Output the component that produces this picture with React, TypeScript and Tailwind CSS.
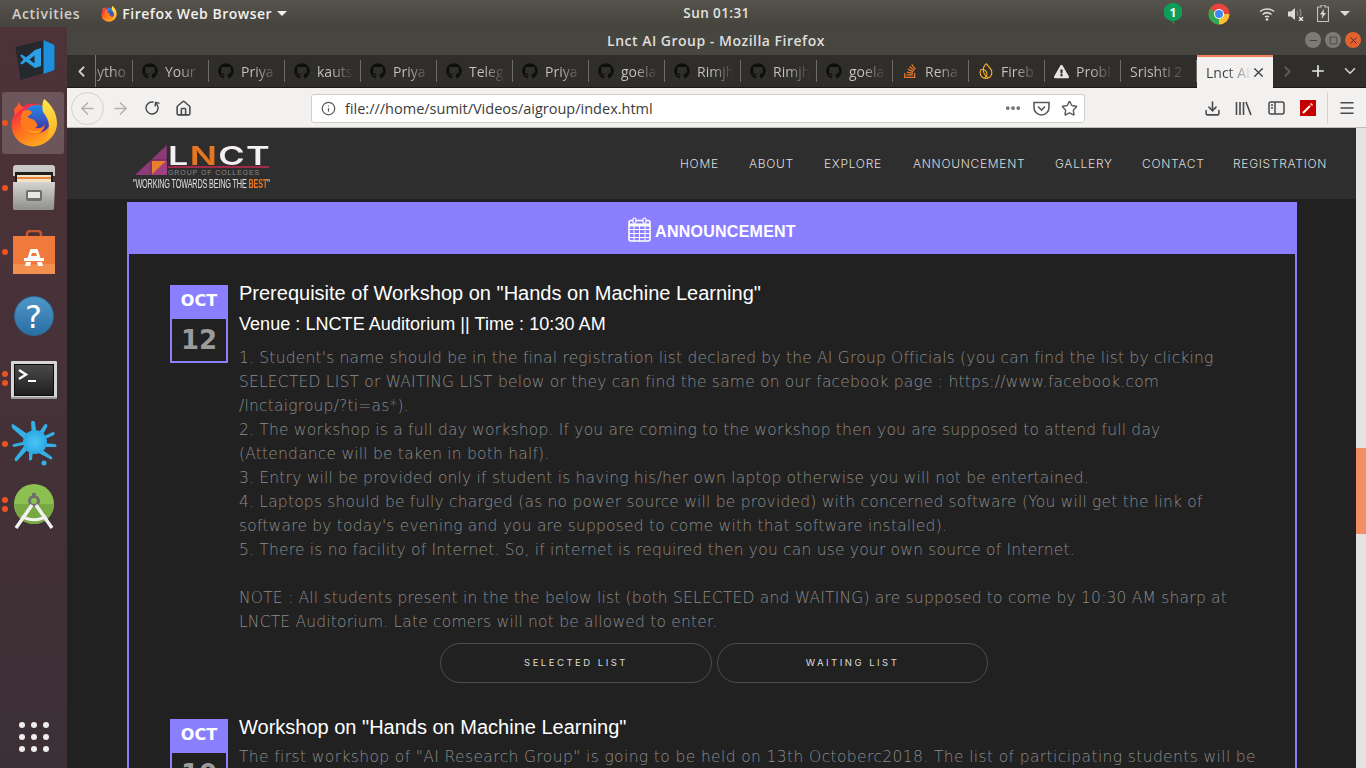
import { ChevronDown, ChevronLeft, ChevronRight, Download, Ellipsis, Info, Menu, Plus, RotateCw, ArrowLeft, ArrowRight, Star, Minus, X, Square, House } from "lucide-react";
import { FaGithub, FaStackOverflow, FaExclamationTriangle } from "react-icons/fa";
import { SiFirebase } from "react-icons/si";

const UBUNTU = "font-['Open_Sans','Noto_Sans',sans-serif]";

const tabs = [
  { label: "Your", icon: "gh" },
  { label: "Priya", icon: "gh" },
  { label: "kauts", icon: "gh" },
  { label: "Priya", icon: "gh" },
  { label: "Teleg", icon: "gh" },
  { label: "Priya", icon: "gh" },
  { label: "goela", icon: "gh" },
  { label: "Rimjh", icon: "gh" },
  { label: "Rimjh", icon: "gh" },
  { label: "goela", icon: "gh" },
  { label: "Rena", icon: "so" },
  { label: "Fireb", icon: "fb" },
  { label: "Probl", icon: "warn" },
  { label: "Srishti 2", icon: "" },
];

const navLinks = [
  { label: "HOME", w: "w-[39px]" },
  { label: "ABOUT", w: "w-[45px]" },
  { label: "EXPLORE", w: "w-[59px]" },
  { label: "ANNOUNCEMENT", w: "w-[112px]" },
  { label: "GALLERY", w: "w-[57px]" },
  { label: "CONTACT", w: "w-[61px]" },
  { label: "REGISTRATION", w: "w-[93px]" },
];

const firstItemLines = [
  "1. Student's name should be in the final registration list declared by the AI Group Officials (you can find the list by clicking",
  "SELECTED LIST or WAITING LIST below or they can find the same on our facebook page : https://www.facebook.com",
  "/lnctaigroup/?ti=as*).",
  "2. The workshop is a full day workshop. If you are coming to the workshop then you are supposed to attend full day",
  "(Attendance will be taken in both half).",
  "3. Entry will be provided only if student is having his/her own laptop otherwise you will not be entertained.",
  "4. Laptops should be fully charged (as no power source will be provided) with concerned software (You will get the link of",
  "software by today's evening and you are supposed to come with that software installed).",
  "5. There is no facility of Internet. So, if internet is required then you can use your own source of Internet.",
  "\u00a0",
  "NOTE : All students present in the the below list (both SELECTED and WAITING) are supposed to come by 10:30 AM sharp at",
  "LNCTE Auditorium. Late comers will not be allowed to enter.",
];

function FirefoxIcon({ size }: { size: number }) {
  return (
    <svg width={size} height={size} viewBox="0 0 46 48">
      <defs>
        <linearGradient id="ffbody" x1="0.2" y1="0.1" x2="0.7" y2="1">
          <stop offset="0" stopColor="#f2264f" />
          <stop offset="0.45" stopColor="#ff6a1f" />
          <stop offset="1" stopColor="#ffb01f" />
        </linearGradient>
        <linearGradient id="fftail" x1="0.5" y1="0" x2="0.5" y2="1">
          <stop offset="0" stopColor="#ffe94d" />
          <stop offset="1" stopColor="#ffa31a" />
        </linearGradient>
        <linearGradient id="ffglobe" x1="0.5" y1="0" x2="0.5" y2="1">
          <stop offset="0" stopColor="#1f8be8" />
          <stop offset="1" stopColor="#4b2aa0" />
        </linearGradient>
      </defs>
      <circle cx="22" cy="26" r="21.500" fill="url(#ffbody)" />
      <path d="M3 10c2-2 4-4 5-7 1 3 3 5 5 6-4 2-7 4-9 8z" fill="#ff5a2a" />
      <circle cx="26" cy="20" r="14" fill="url(#ffglobe)" />
      <path d="M12 12c5-2 8-1 9 2-1 2-4 2-4 4s5 1 7 4 4 5 0 7c5 1 9-1 10-4-1 9-9 13-17 10C10 32 7 21 12 12z" fill="#ff7a1c" />
      <path d="M16 30c4 3 10 3 14 1-3 4-10 4-14-1z" fill="#ffb01f" />
      <path d="M33 0c7 5 13 14 13 24 0 12-10 22-22 22 9-2 14-9 14-18 0-7-3-11-6-15-1-4-1-9 1-13z" fill="url(#fftail)" />
    </svg>
  );
}

function VsCodeIcon() {
  return (
    <svg width="46" height="46" viewBox="0 0 46 46">
      <path d="M4.500 10 32.500 3l11 5v25l-34 10z" fill="#25282d" />
      <path d="M32.500 3l11 5v25l-11 4z" fill="#1f8fdc" />
      <path d="M24 13 15 20.500l-4-3-2 1 3.500 4-3.500 4 2 1 4-3L24 31l6-2V11zm-.500 5.500v8l-5-4z" fill="#2ba0e8" />
    </svg>
  );
}

function FilesIcon() {
  return (
    <svg width="44" height="46" viewBox="0 0 44 46">
      <defs>
        <linearGradient id="filesbody" x1="0" y1="0" x2="0" y2="1">
          <stop offset="0" stopColor="#d4d4d2" />
          <stop offset="1" stopColor="#8f8f8d" />
        </linearGradient>
      </defs>
      <path d="M1 3a3 3 0 0 1 3-3h36a3 3 0 0 1 3 3v8H1z" fill="#c8c8c6" />
      <rect x="3" y="7" width="38" height="10" fill="#1f1e1d" />
      <rect x="5" y="10" width="34" height="7" fill="#f2e3c2" />
      <rect x="5" y="12" width="34" height="2" fill="#e8843f" />
      <path d="M1 17h42l-1 27a2 2 0 0 1-2 1H3a2 2 0 0 1-2-1z" fill="url(#filesbody)" />
      <rect x="14" y="25" width="16" height="11" rx="2" fill="#6f6f6d" />
      <rect x="16" y="27" width="12" height="6" fill="#e8e7e4" />
    </svg>
  );
}

function StoreIcon() {
  return (
    <svg width="44" height="44" viewBox="0 0 44 44">
      <path d="M15 11V4a3 3 0 0 1 3-3h8a3 3 0 0 1 3 3v7" fill="none" stroke="#c9552a" strokeWidth="2.500" />
      <path d="M1 6h42v38H1z" fill="#ef7a3b" />
      <path d="M1 34h42v10H1z" fill="#f4904f" />
      <path d="M18.500 19h7l3 9h-13z" fill="#fff" />
      <path d="M12 28h20v3H12z" fill="#fff" />
      <path d="M14 32h5l-1 4h-5zM25 32h5l1 4h-5z" fill="#fff" />
      <path d="M20 23h4l1 3h-6z" fill="#ef7a3b" />
    </svg>
  );
}

function TerminalIcon() {
  return (
    <svg width="46" height="38" viewBox="0 0 46 38">
      <defs>
        <linearGradient id="termbg" x1="0" y1="0" x2="0" y2="1">
          <stop offset="0" stopColor="#4a4a4a" />
          <stop offset="1" stopColor="#1f1f1f" />
        </linearGradient>
      </defs>
      <rect x="0" y="0" width="46" height="38" rx="1" fill="#d6d6d4" />
      <rect x="0" y="36" width="46" height="2" fill="#9a9a98" />
      <rect x="3.500" y="3.500" width="39" height="31" fill="url(#termbg)" stroke="#0c0c0c" />
      <path d="M8 9l7 4.500-7 4.500" fill="none" stroke="#fff" strokeWidth="2.400" />
      <path d="M17 20h8" stroke="#fff" strokeWidth="2" />
    </svg>
  );
}

function SplashIcon() {
  return (
    <svg width="46" height="46" viewBox="0 0 46 46">
      <defs>
        <radialGradient id="splash">
          <stop offset="0" stopColor="#4cc6f5" />
          <stop offset="1" stopColor="#2aa8e4" />
        </radialGradient>
      </defs>
      <g fill="#35b0e6">
        <path d="M22 17 2 3c-2 0-2 3 0 5l17 15z" />
        <path d="M21 16 20 1c2-2 4-1 4 1l2 14z" />
        <path d="M26 14 34 3c2 0 3 1 2 3l-6 11z" />
        <path d="M29 17l13-6c2 0 2 2 1 3l-13 6z" />
        <path d="M30 22l14 1c2 1 2 3 0 3l-14 0z" />
        <path d="M29 27l12 9c1 2-1 3-2 2L26 31z" />
        <path d="M22 30l-1 8c-1 2-3 2-3 0l0-9z" />
        <path d="M18 27 6 40c-2 1-3-1-2-3l10-13z" />
        <path d="M16 23 3 26c-2 0-2-3 0-3l13-3z" />
      </g>
      <circle cx="33" cy="42" r="2.500" fill="#35b0e6" />
      <circle cx="24" cy="21" r="12" fill="url(#splash)" />
    </svg>
  );
}

function AndroidStudioIcon() {
  return (
    <svg width="46" height="48" viewBox="0 0 46 48">
      <circle cx="23" cy="21" r="20" fill="#8cc152" />
      <path d="M3 21a20 20 0 0 0 40 0z" fill="#78a844" />
      <circle cx="23" cy="18" r="4.500" fill="none" stroke="#6f6f6f" strokeWidth="3" />
      <rect x="21" y="10" width="4" height="4" fill="#6f6f6f" />
      <path d="M21 22 5 45M25 22l16 23" stroke="#f2f2f2" strokeWidth="3.500" />
      <path d="M11 33c6 5 18 5 24 0" fill="none" stroke="#f2f2f2" strokeWidth="3" />
    </svg>
  );
}

function ChromeIcon() {
  return (
    <svg width="22" height="22" viewBox="0 0 22 22">
      <circle cx="11" cy="11" r="10.500" fill="#e8453c" />
      <path d="M11 11 1.900 5.800A10.500 10.500 0 0 0 11 21.500z" fill="#2fa84f" />
      <path d="M11 11h10.500A10.500 10.500 0 0 1 11 21.500z" fill="#fbc02d" />
      <circle cx="11" cy="11" r="5" fill="#fff" />
      <circle cx="11" cy="11" r="4" fill="#4285f4" />
    </svg>
  );
}

function TabIcon({ kind }: { kind: string }) {
  if (kind === "gh") return <FaGithub className="text-[#0f0f0e]" size={16} />;
  if (kind === "so") return <FaStackOverflow className="text-[#e8782c]" size={16} />;
  if (kind === "fb") return <SiFirebase className="text-[#ffb52b]" size={16} />;
  if (kind === "warn") return <FaExclamationTriangle className="text-[#e6e5e2]" size={15} />;
  return null;
}

function Tab({ label, icon }: { label: string; icon: string }) {
  return (
    <div className="w-[76px] h-full shrink-0 flex items-center pl-[9px] pr-[7px] gap-[7px] relative">
      {icon && <TabIcon kind={icon} />}
      <span className="flex-1 overflow-hidden whitespace-nowrap text-[14px] bg-gradient-to-r from-[#c6c5c2] from-40% to-[#2f2e2b] bg-clip-text text-transparent">
        {label}
      </span>
      <span className="absolute right-0 top-[5px] bottom-[5px] w-px bg-[#6d6c68]" />
    </div>
  );
}

function Logo() {
  return (
    <div className="w-[138px] h-[48px] flex flex-col">
      <div className="flex items-start h-[35px]">
        <svg width="32" height="30" viewBox="0 0 32 30" className="shrink-0 ml-[2px] mt-[3px]">
          <path d="M0 30 32 0v30z" fill="#8e3a78" />
          <path d="M16 15h16v15H16z" fill="#a0407f" />
          <path d="M17 16h14L17 29z" fill="#ea7f2b" />
          <path d="M32 0v15H16M16 15v15" fill="none" stroke="#5c2b55" />
        </svg>
        <div className="ml-[1px] mt-[3px] flex flex-col w-[101px]">
          <div className="h-[21px] font-['Inter',sans-serif] text-[26px] leading-[21px] font-semibold tracking-[1px] text-[#f4eff2] scale-x-[1.38] origin-left whitespace-nowrap">
            L<span className="text-[#e8761e]">N</span>CT
          </div>
          <div className="h-[2px] bg-[#a02a4a]" />
          <div className="mt-px font-['Liberation_Sans',sans-serif] text-[7px] leading-[8px] tracking-[0.9px] text-[#8a8a8a] whitespace-nowrap">
            GROUP OF COLLEGES
          </div>
        </div>
      </div>
      <div className="font-['Liberation_Sans',sans-serif] text-[13px] leading-[13px] text-[#e0e0e0] whitespace-nowrap tracking-[-0.3px] scale-x-[0.56] origin-left">
        "WORKING TOWARDS BEING THE <span className="text-[#e8761e] font-bold">BEST</span>"
      </div>
    </div>
  );
}

function CalendarIcon() {
  return (
    <svg width="23" height="25" viewBox="0 0 23 25" fill="none" stroke="#fff">
      <rect x="1" y="3.500" width="21" height="20.500" rx="2" strokeWidth="1.600" />
      <path d="M1 8h21" strokeWidth="3" />
      <path d="M1 12.500h21M1 16.500h21M1 20.500h21M6 9v15M11.500 9v15M17 9v15" strokeWidth="1" />
      <rect x="5" y="1" width="3" height="5.500" rx="1.500" fill="#8a80ff" strokeWidth="1.200" />
      <rect x="15" y="1" width="3" height="5.500" rx="1.500" fill="#8a80ff" strokeWidth="1.200" />
    </svg>
  );
}

function DateBox({ day }: { day: string }) {
  return (
    <div className="w-[58px] h-[78px] shrink-0 border-2 border-[#8a80ff] flex flex-col font-['DejaVu_Sans',sans-serif] font-bold text-center">
      <div className="h-[32px] bg-[#8a80ff] text-white text-[16px] leading-[28px] -mx-px">OCT</div>
      <div className="flex-1 text-[#9b9b9b] text-[26px] leading-[42px]">{day}</div>
    </div>
  );
}

export default function App() {
  return (
    <div className="w-[1366px] h-[768px] overflow-hidden flex flex-col bg-[#212121]">
      {/* ubuntu top bar */}
      <div className={`h-[27px] shrink-0 flex items-center bg-gradient-to-b from-[#57544d] to-[#45433d] text-[#e4e3df] text-[14px] ${UBUNTU}`}>
        <div className="w-[683px] flex items-center font-semibold">
          <span className="ml-[12px] text-[#d0cfca] tracking-[0.7px]">Activities</span>
          <span className="ml-[21px]"><FirefoxIcon size={16} /></span>
          <span className="ml-[5px] text-[#f2f1ee] whitespace-nowrap tracking-[0.5px]">Firefox Web Browser</span>
          <span className="ml-[5px] border-x-[5px] border-x-transparent border-t-[5px] border-t-[#f2f1ee]" />
        </div>
        <div className="w-[67px] text-center font-semibold text-[13.500px] whitespace-nowrap tracking-[0.4px]">Sun 01:31</div>
        <div className="flex-1 flex items-center">
          <svg width="18" height="22" viewBox="0 0 18 22" className="ml-[414px]">
            <path d="M9 0a9 9 0 0 1 1 18v4l-2-4A9 9 0 0 1 9 0z" fill="#0f9d58" />
            <text x="9" y="13.500" textAnchor="middle" fontSize="12" fontWeight="700" fill="#fff" fontFamily="Open Sans">1</text>
          </svg>
          <span className="ml-[26px]"><ChromeIcon /></span>
          <svg width="16" height="14" viewBox="0 0 16 14" className="ml-[29px]" fill="none" stroke="#dcdbd7" strokeWidth="1.500">
            <path d="M1 4.500c4-3.500 10-3.500 14 0M3.500 7.500c3-2.500 6-2.500 9 0M6 10c1.300-1 2.700-1 4 0" />
            <circle cx="8" cy="12.500" r="1.300" fill="#dcdbd7" stroke="none" />
          </svg>
          <svg width="16" height="14" viewBox="0 0 16 14" className="ml-[13px]">
            <path d="M0 4.500h3L7 1v12L3 9.500H0z" fill="#dcdbd7" />
            <path d="M9 4c1 1.500 1 3 .5 5M11.500 2c1.500 2 1.500 5 1 7" fill="none" stroke="#8a8984" strokeWidth="1.200" />
            <path d="M11 10l4 4M15 10l-4 4" stroke="#f0efeb" strokeWidth="1.300" />
          </svg>
          <svg width="12" height="17" viewBox="0 0 12 17" className="ml-[13px]">
            <path d="M4 0h4v2h3.500v14.500H.5V2H4z" fill="none" stroke="#c4c3bf" strokeWidth="1.200" />
            <path d="M7 4 3 9.500h2.500L4.500 14 9 8H6.500z" fill="#dcdbd7" />
          </svg>
          <span className="ml-[11px] border-x-[5px] border-x-transparent border-t-[5px] border-t-[#dcdbd7]" />
        </div>
      </div>

      <div className="flex-1 flex min-h-0">
        {/* launcher dock */}
        <div className="w-[67px] shrink-0 flex flex-col pt-px bg-gradient-to-b from-[#4e3239] to-[#3c3036]">
          <div className="h-[64px] flex items-center justify-center"><VsCodeIcon /></div>
          <div className="h-[64px] relative flex items-center justify-center">
            <div className="absolute left-[2px] right-[3px] top-0 h-[62px] rounded-[3px] bg-[#6c565b]" />
            <span className="absolute left-[2px] top-[28px] w-[6px] h-[6px] rounded-full bg-[#e95420]" />
            <div className="relative -mt-[2px]"><FirefoxIcon size={48} /></div>
          </div>
          <div className="h-[64px] relative flex items-center justify-center">
            <span className="absolute left-[2px] top-[29px] w-[6px] h-[6px] rounded-full bg-[#e95420]" />
            <FilesIcon />
          </div>
          <div className="h-[64px] relative flex items-center justify-center">
            <span className="absolute left-[2px] top-[29px] w-[6px] h-[6px] rounded-full bg-[#e95420]" />
            <StoreIcon />
          </div>
          <div className="h-[64px] flex items-center justify-center">
            <div className="w-[40px] h-[40px] rounded-full bg-gradient-to-b from-[#4f97c9] to-[#2a6fa3] text-white text-[32px] leading-[40px] text-center font-['DejaVu_Sans',sans-serif] border border-[#2d6a99]">?</div>
          </div>
          <div className="h-[64px] relative flex items-center justify-center">
            <span className="absolute left-[2px] top-[23px] w-[6px] h-[6px] rounded-full bg-[#e95420]" />
            <span className="absolute left-[2px] top-[32px] w-[6px] h-[6px] rounded-full bg-[#e95420]" />
            <TerminalIcon />
          </div>
          <div className="h-[63px] relative flex items-center justify-center">
            <span className="absolute left-[2px] top-[29px] w-[6px] h-[6px] rounded-full bg-[#e95420]" />
            <SplashIcon />
          </div>
          <div className="h-[64px] relative flex items-center justify-center">
            <span className="absolute left-[2px] top-[22px] w-[6px] h-[6px] rounded-full bg-[#e95420]" />
            <span className="absolute left-[2px] top-[31px] w-[6px] h-[6px] rounded-full bg-[#e95420]" />
            <AndroidStudioIcon />
          </div>
          <div className="mt-auto mb-[16px] mx-auto grid grid-cols-3 gap-[6px]">
            {[...Array(9)].map((_, i) => (
              <span key={i} className="w-[6px] h-[6px] rounded-full bg-[#f0eeee]" />
            ))}
          </div>
        </div>

        {/* firefox window */}
        <div className="flex-1 min-w-0 flex flex-col">
          <div className={`h-[28px] shrink-0 flex items-center bg-[#474540] pb-[2px] ${UBUNTU}`}>
            <div className="flex-1" />
            <div className="ml-[4px] text-[14px] font-semibold text-[#dfdedb] whitespace-nowrap tracking-[0.5px]">Lnct AI Group - Mozilla Firefox</div>
            <div className="flex-1 flex justify-end items-center gap-[4px] pr-[5px]">
              <span className="w-[16px] h-[16px] rounded-full bg-[#7b7a75] flex items-center justify-center"><Minus size={11} className="text-[#3d3c38]" /></span>
              <span className="w-[16px] h-[16px] rounded-full bg-[#7b7a75] flex items-center justify-center"><Square size={9} className="text-[#3d3c38]" /></span>
              <span className="w-[16px] h-[16px] rounded-full bg-[#e4602e] flex items-center justify-center"><X size={11} className="text-[#3d2a20]" /></span>
            </div>
          </div>

          <div className={`h-[33px] shrink-0 flex bg-[#2f2e2b] border-b border-[#1b1a18] ${UBUNTU}`}>
            <div className="w-[28px] h-full flex items-center justify-center pl-[1px]">
              <ChevronLeft size={17} className="text-[#cfcecb]" strokeWidth={2.500} />
            </div>
            <div className="w-[38px] h-full shrink-0 flex items-center justify-end relative border-l border-[#77756f] overflow-hidden">
              <span className="whitespace-nowrap text-[14px] pr-[7px] bg-gradient-to-r from-[#6d6c68] via-[#c6c5c2] to-[#2f2e2b] bg-clip-text text-transparent">pytho</span>
              <span className="absolute right-0 top-[5px] bottom-[5px] w-px bg-[#6d6c68]" />
            </div>
            {tabs.map((t, i) => (
              <Tab key={i} label={t.label} icon={t.icon} />
            ))}
            <div className="w-[76px] h-[33px] shrink-0 flex items-center pl-[9px] pr-[7px] bg-[#f2f1f0] border-t-2 border-[#f0825a] text-[14px]">
              <span className="flex-1 overflow-hidden whitespace-nowrap bg-gradient-to-r from-[#3b3b3b] from-40% to-[#e8e8e8] bg-clip-text text-transparent">Lnct AI</span>
              <X size={15} className="text-[#3a3a3a]" />
            </div>
            <div className="flex-1 flex items-center">
              <ChevronRight size={17} className="ml-[6px] text-[#5e5d59]" strokeWidth={2.500} />
              <Plus size={18} className="ml-[13px] text-[#e8e7e4]" strokeWidth={2.200} />
              <ChevronDown size={18} className="ml-[14px] text-[#d0cfcc]" strokeWidth={2.200} />
            </div>
          </div>

          <div className={`h-[40px] shrink-0 flex items-center pt-px bg-[#f2f1f0] border-b border-[#bdbcb9] text-[#4a4a4a] ${UBUNTU}`}>
            <div className="ml-[4px] w-[33px] h-[33px] rounded-full border border-[#d2d1cf] flex items-center justify-center">
              <ArrowLeft size={19} className="text-[#b4b3b1]" />
            </div>
            <ArrowRight size={19} className="ml-[7px] text-[#b4b3b1]" />
            <RotateCw size={16} className="ml-[14px] text-[#4a4a4a] -scale-x-100 rotate-[100deg]" strokeWidth={2.200} />
            <House size={17} className="ml-[15px] text-[#4a4a4a]" strokeWidth={2.200} />
            <div className="ml-[119px] w-[774px] h-[29px] flex items-center bg-white border border-[#cfcecc] rounded-[3px]">
              <Info size={15} className="ml-[9px] text-[#5a5a5a]" />
              <span className="ml-[9px] pt-px text-[14.500px] text-[#3c3c3c] whitespace-nowrap">file:///home/sumit/Videos/aigroup/index.html</span>
              <Ellipsis size={18} className="ml-auto text-[#6a6a6a]" strokeWidth={3} />
              <svg width="17" height="15" viewBox="0 0 17 15" className="ml-[11px]" fill="none" stroke="#5a5a5a" strokeWidth="1.600">
                <path d="M1 1.500h15v5a7.500 7.500 0 0 1-15 0z" />
                <path d="M5 5.500l3.500 3.500L12 5.500" />
              </svg>
              <Star size={17} className="ml-[11px] mr-[6px] text-[#5a5a5a]" strokeWidth={2} />
            </div>
            <Download size={17} className="ml-[119px] text-[#4a4a4a]" strokeWidth={2.200} />
            <svg width="17" height="15" viewBox="0 0 17 15" className="ml-[14px]" fill="none" stroke="#4a4a4a" strokeWidth="1.600">
              <path d="M1.500 1v13M5 1v13M8.500 1v13M11 1l5 13" />
            </svg>
            <svg width="17" height="14" viewBox="0 0 17 14" className="ml-[16px]" fill="none" stroke="#4a4a4a" strokeWidth="1.500">
              <rect x="1" y="1" width="15" height="12" rx="2" />
              <path d="M7 1v12M3 4h2M3 7h2" />
            </svg>
            <div className="ml-[15px] w-[16px] h-[16px] bg-[#c60000] flex items-center justify-center">
              <svg width="12" height="12" viewBox="0 0 12 12" stroke="#fff" strokeWidth="2"><path d="M1 11l7-7" /><path d="M9 1v2M11 3H9" strokeWidth="1" /></svg>
            </div>
            <span className="ml-[11px] w-px h-[32px] bg-[#d4d3d1]" />
            <Menu size={18} className="ml-[10px] text-[#4a4a4a]" strokeWidth={2.200} />
          </div>

          {/* page */}
          <div className="flex-1 min-h-0 flex">
            <div className="flex-1 min-w-0 overflow-hidden flex flex-col bg-[#212121]">
              <div className="h-[71px] shrink-0 bg-[#2e2e2e] flex items-center">
                <div className="ml-[66px] mt-[4px]"><Logo /></div>
                <div className="ml-auto mr-[30px] flex gap-[30px] font-['Inter',sans-serif] text-[12px] font-light text-[#dcdcdc] tracking-[0.7px]">
                  {navLinks.map((l) => (
                    <span key={l.label} className={`${l.w} whitespace-nowrap`}>{l.label}</span>
                  ))}
                </div>
              </div>

              <div className="mt-[3px] ml-[60px] w-[1170px] shrink-0 border-x-2 border-[#8a80ff]">
                <div className="h-[52px] -mx-[2px] bg-[#8a80ff] flex items-center justify-center gap-[4px] font-['Liberation_Sans',sans-serif] font-bold text-[16px] tracking-[0.25px] text-white pt-[4px]">
                  <span className="-mt-[1px]"><CalendarIcon /></span>
                  <span className="mt-[3px]">ANNOUNCEMENT</span>
                </div>

                <div className="pt-[31px] pl-[41px] flex gap-[11px]">
                  <DateBox day="12" />
                  <div className="flex-1 min-w-0">
                    <div className="font-['Liberation_Sans',sans-serif] text-[20px] leading-[16px] text-white">
                      Prerequisite of Workshop on "Hands on Machine Learning"
                    </div>
                    <div className="font-['Liberation_Sans',sans-serif] text-[18px] leading-[20px] text-white mt-[13px] tracking-[0.05px]">
                      Venue : LNCTE Auditorium || Time : 10:30 AM
                    </div>
                    <div className="mt-[12px] font-['DejaVu_Sans',sans-serif] font-extralight text-[15.500px] leading-[24px] text-[#8c8c8c] whitespace-nowrap tracking-[0.2px]">
                      {firstItemLines.map((line, i) => (
                        <div key={i}>{line}</div>
                      ))}
                    </div>
                    <div className="mt-[9px] ml-[201px] flex gap-[5px] pb-0 font-['Inter',sans-serif] text-[9.500px] tracking-[2.500px] text-[#dcdcdc]">
                      <div className="w-[272px] h-[40px] pt-px rounded-full border border-[#4d4d4d] flex items-center justify-center">SELECTED LIST</div>
                      <div className="w-[271px] h-[40px] pt-px rounded-full border border-[#4d4d4d] flex items-center justify-center">WAITING LIST</div>
                    </div>
                  </div>
                </div>

                <div className="mt-[36px] pl-[41px] flex gap-[11px]">
                  <DateBox day="10" />
                  <div className="flex-1 min-w-0">
                    <div className="font-['Liberation_Sans',sans-serif] text-[20px] leading-[16px] text-white">
                      Workshop on "Hands on Machine Learning"
                    </div>
                    <div className="mt-[10px] font-['DejaVu_Sans',sans-serif] font-extralight text-[15.500px] leading-[24px] text-[#8c8c8c] whitespace-nowrap tracking-[0.38px]">
                      The first workshop of "AI Research Group" is going to be held on 13th Octoberc2018. The list of participating students will be
                    </div>
                  </div>
                </div>
              </div>
            </div>

            <div className="w-[10px] shrink-0 bg-[#e3e3e3] pt-[320px]">
              <div className="h-[86px] bg-[#f28f66]" />
            </div>
          </div>
        </div>
      </div>
    </div>
  );
}
